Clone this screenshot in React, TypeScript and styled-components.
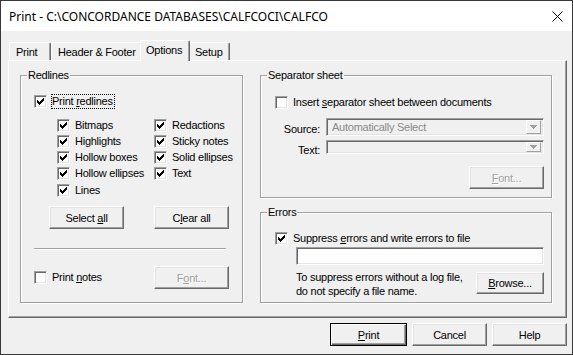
import React from 'react';
import styled, { createGlobalStyle, css } from 'styled-components';

const GlobalStyle = createGlobalStyle`
  html, body { margin: 0; padding: 0; background: #f0f0f0; }
  * { box-sizing: border-box; }
`;

const UI_FONT = `"Liberation Sans", Arial, sans-serif`;

const Window = styled.div`
  width: 573px;
  height: 355px;
  border: 1px solid #383838;
  background: #f0f0f0;
  display: flex;
  flex-direction: column;
  overflow: hidden;
  font-family: ${UI_FONT};
  font-size: 11px;
  letter-spacing: -0.25px;
  color: #000;
`;

const TitleBar = styled.div`
  flex: none;
  height: 30px;
  background: #fff;
  display: flex;
  align-items: center;
  justify-content: space-between;
  padding-left: 8px;
  font-family: "Noto Sans", sans-serif;
  font-size: 12px;
  letter-spacing: 0;
`;

const TitleText = styled.span`
  white-space: nowrap;
`;

const CloseButton = styled.div`
  width: 30px;
  height: 30px;
  display: flex;
  align-items: center;
  justify-content: center;
`;

const Body = styled.div`
  flex: 1;
  display: flex;
  flex-direction: column;
  padding: 9px 5px 8px 7px;
`;

const TabStrip = styled.div`
  display: flex;
  align-items: flex-end;
  padding-left: 1px;
  height: 20px;
`;

const Tab = styled.div<{ $width: number; $active?: boolean }>`
  width: ${(p) => p.$width}px;
  height: 18px;
  flex: none;
  display: flex;
  align-items: center;
  padding-left: 6px;
  background: #f0f0f0;
  border-top: 1px solid #fff;
  border-left: 1px solid #fff;
  border-right: 1px solid #696969;
  box-shadow: inset -1px 0 0 #a0a0a0;
  border-radius: 2px 2px 0 0;
  white-space: nowrap;
  ${(p) =>
    p.$active &&
    css`
      position: relative;
      z-index: 1;
      height: 21px;
      margin: 0 -2px -1px -2px;
      padding-left: 5px;
      padding-bottom: 3px;
    `}
`;

const Panel = styled.div`
  height: 258px;
  flex: none;
  display: grid;
  grid-template-columns: 223px 292px;
  column-gap: 17px;
  padding: 14px 14px 14px 11px;
  border-top: 1px solid #fff;
  border-left: 1px solid #fff;
  border-right: 1px solid #696969;
  border-bottom: 1px solid #696969;
  box-shadow: inset -1px -1px 0 #a0a0a0;
`;

const RightColumn = styled.div`
  display: flex;
  flex-direction: column;
  gap: 14px;
`;

const GroupBox = styled.div<{ $height?: number }>`
  position: relative;
  border: 1px solid #a0a0a0;
  box-shadow: inset 1px 1px 0 #fff, 1px 1px 0 #fff;
  ${(p) => (p.$height ? `height: ${p.$height}px; flex: none;` : `flex: 1;`)}
`;

const GroupTitle = styled.span`
  position: absolute;
  top: -7px;
  left: 6px;
  padding: 0 1px;
  line-height: 13px;
  background: #f0f0f0;
  white-space: nowrap;
`;

const RedlinesBody = styled.div`
  display: flex;
  flex-direction: column;
  align-items: flex-start;
  padding: 17px 0 0 13px;
`;

const SubGrid = styled.div`
  margin: 8px 0 0 23px;
  display: grid;
  grid-auto-flow: column;
  grid-template-rows: repeat(5, 16.25px);
  grid-template-columns: 97px auto;
`;

const ButtonRow = styled.div`
  margin: 8px 0 0 15px;
  display: flex;
  gap: 30px;
`;

const Divider = styled.div`
  margin-top: 19px;
  width: 192px;
  height: 2px;
  border-top: 1px solid #a0a0a0;
  border-bottom: 1px solid #fff;
`;

const NotesRow = styled.div`
  margin-top: 16px;
  display: grid;
  grid-template-columns: 120px 75px;
  align-items: center;
`;

const SepBody = styled.div`
  display: flex;
  flex-direction: column;
  padding: 18px 7px 0 14px;
`;

const FieldGrid = styled.div`
  margin-top: 8px;
  display: grid;
  grid-template-columns: 45px 1fr;
  grid-template-rows: 18px 17px;
  column-gap: 6px;
  row-gap: 4px;
`;

const FieldLabel = styled.span`
  justify-self: end;
  align-self: end;
  line-height: 13px;
  white-space: nowrap;
`;

const FontButtonRow = styled.div`
  margin-top: 9px;
  display: flex;
  justify-content: flex-end;
`;

const ErrorsBody = styled.div`
  display: flex;
  flex-direction: column;
  padding: 17px 7px 0 14px;
`;

const TextInput = styled.div`
  margin: 1px 0 0 21px;
  height: 18px;
  background: #fff;
  border: 1px solid;
  border-color: #a0a0a0 #fff #fff #a0a0a0;
  box-shadow: inset 1px 1px 0 #696969, inset -1px -1px 0 #e3e3e3;
`;

const InfoRow = styled.div`
  margin: 5px 0 0 21px;
  display: grid;
  grid-template-columns: 1fr 68px;
  align-items: start;
`;

const InfoText = styled.div`
  line-height: 14px;
`;

const BrowseWrap = styled.div`
  margin-top: 2px;
`;

const ButtonBar = styled.div`
  margin-top: 5px;
  display: flex;
  justify-content: flex-end;
  gap: 5px;
`;

const Button = styled.div<{ $width?: number; $height?: number; $disabled?: boolean; $default?: boolean }>`
  width: ${(p) => p.$width ?? 75}px;
  height: ${(p) => p.$height ?? 23}px;
  flex: none;
  display: flex;
  align-items: center;
  justify-content: center;
  background: #f0f0f0;
  border: 1px solid;
  border-color: #fff #696969 #696969 #fff;
  box-shadow: inset -1px -1px 0 #a0a0a0, inset 1px 1px 0 #e3e3e3;
  white-space: nowrap;
  ${(p) =>
    p.$disabled &&
    css`
      color: #a0a0a0;
      text-shadow: 1px 1px 0 #fff;
    `}
  ${(p) =>
    p.$default &&
    css`
      border-color: #000;
      box-shadow: inset 1px 1px 0 #fff, inset -1px -1px 0 #696969, inset -2px -2px 0 #a0a0a0;
    `}
`;

const ButtonLabel = styled.span`
  white-space: pre;
`;

const Key = styled.span`
  text-decoration: underline;
  text-underline-offset: 1px;
`;

const CheckRow = styled.div`
  height: 16px;
  display: flex;
  align-items: center;
  gap: 4px;
  white-space: nowrap;
`;

const CheckBoxFrame = styled.span`
  width: 13px;
  height: 13px;
  flex: none;
  display: flex;
  align-items: center;
  justify-content: center;
  background: #fff;
  border: 1px solid;
  border-color: #a0a0a0 #fff #fff #a0a0a0;
  box-shadow: inset 1px 1px 0 #696969, inset -1px -1px 0 #e3e3e3;
`;

const CheckLabel = styled.span<{ $focused?: boolean }>`
  line-height: 13px;
  border: 1px dotted ${(p) => (p.$focused ? '#000' : 'transparent')};
  padding-right: 1px;
`;

const Combo = styled.div<{ $height: number }>`
  height: ${(p) => p.$height}px;
  display: flex;
  align-items: center;
  background: #f0f0f0;
  border: 1px solid;
  border-color: #a0a0a0 #fff #fff #a0a0a0;
  box-shadow: inset 1px 1px 0 #696969, inset -1px -1px 0 #e3e3e3;
  padding: 1px 2px 1px 1px;
  align-self: start;
`;

const ComboText = styled.span`
  flex: 1;
  padding-left: 4px;
  color: #8a8a8a;
  white-space: nowrap;
`;

const ComboButton = styled.span`
  width: 15px;
  align-self: stretch;
  flex: none;
  display: flex;
  align-items: center;
  justify-content: center;
  background: #f0f0f0;
  border: 1px solid;
  border-color: #fff #a0a0a0 #a0a0a0 #fff;
`;

const CHECK = ['......#', '.....##', '#...###', '##.###.', '#####..', '.###...', '..#....'];
const CHECK_PATH = CHECK.flatMap((row, y) =>
  row.split('').map((c, x) => (c === '#' ? `M${x} ${y}h1v1h-1z` : ''))
).join('');

const CheckMark = () => (
  <svg width="7" height="7" viewBox="0 0 7 7" shapeRendering="crispEdges">
    <path d={CHECK_PATH} fill="#000" />
  </svg>
);

const CheckBox = ({ checked, focused, children }: { checked?: boolean; focused?: boolean; children: React.ReactNode }) => (
  <CheckRow>
    <CheckBoxFrame>{checked && <CheckMark />}</CheckBoxFrame>
    <CheckLabel $focused={focused}>{children}</CheckLabel>
  </CheckRow>
);

const DropArrow = () => (
  <svg width="7" height="4" viewBox="0 0 7 4" shapeRendering="crispEdges">
    <path d="M0 0h7v1h-1v1h-1v1h-1v1h-1v-1h-1v-1h-1v-1h-1z" fill="#a0a0a0" />
  </svg>
);

const CloseIcon = () => (
  <svg width="11" height="11" viewBox="0 0 11 11">
    <path d="M0.5 0.5L10.5 10.5M10.5 0.5L0.5 10.5" stroke="#000" strokeWidth="1" />
  </svg>
);

export default function App() {
  return (
    <>
      <GlobalStyle />
      <Window>
        <TitleBar>
          <TitleText>Print - C:\CONCORDANCE DATABASES\CALFCOCI\CALFCO</TitleText>
          <CloseButton>
            <CloseIcon />
          </CloseButton>
        </TitleBar>
        <Body>
          <TabStrip>
            <Tab $width={42}>Print</Tab>
            <Tab $width={91}>Header &amp; Footer</Tab>
            <Tab $width={50} $active>Options</Tab>
            <Tab $width={42}>Setup</Tab>
          </TabStrip>
          <Panel>
            <GroupBox $height={228}>
              <GroupTitle>Redlines</GroupTitle>
              <RedlinesBody>
                <CheckBox checked focused>
                  Print <Key>r</Key>edlines
                </CheckBox>
                <SubGrid>
                  <CheckBox checked>Bitmaps</CheckBox>
                  <CheckBox checked>Highlights</CheckBox>
                  <CheckBox checked>Hollow boxes</CheckBox>
                  <CheckBox checked>Hollow ellipses</CheckBox>
                  <CheckBox checked>Lines</CheckBox>
                  <CheckBox checked>Redactions</CheckBox>
                  <CheckBox checked>Sticky notes</CheckBox>
                  <CheckBox checked>Solid ellipses</CheckBox>
                  <CheckBox checked>Text</CheckBox>
                </SubGrid>
                <ButtonRow>
                  <Button>
                    <ButtonLabel>
                      Select <Key>a</Key>ll
                    </ButtonLabel>
                  </Button>
                  <Button>
                    <ButtonLabel>
                      C<Key>l</Key>ear all
                    </ButtonLabel>
                  </Button>
                </ButtonRow>
                <Divider />
                <NotesRow>
                  <CheckBox>
                    Print <Key>n</Key>otes
                  </CheckBox>
                  <Button $disabled>
                    <ButtonLabel>
                      F<Key>o</Key>nt...
                    </ButtonLabel>
                  </Button>
                </NotesRow>
              </RedlinesBody>
            </GroupBox>
            <RightColumn>
              <GroupBox $height={123}>
                <GroupTitle>Separator sheet</GroupTitle>
                <SepBody>
                  <CheckBox>
                    Insert <Key>s</Key>eparator sheet between documents
                  </CheckBox>
                  <FieldGrid>
                    <FieldLabel>Source:</FieldLabel>
                    <Combo $height={18}>
                      <ComboText>Automatically Select</ComboText>
                      <ComboButton>
                        <DropArrow />
                      </ComboButton>
                    </Combo>
                    <FieldLabel>Text:</FieldLabel>
                    <Combo $height={14}>
                      <ComboText />
                      <ComboButton>
                        <DropArrow />
                      </ComboButton>
                    </Combo>
                  </FieldGrid>
                  <FontButtonRow>
                    <Button $disabled>
                      <ButtonLabel>
                        <Key>F</Key>ont...
                      </ButtonLabel>
                    </Button>
                  </FontButtonRow>
                </SepBody>
              </GroupBox>
              <GroupBox>
                <GroupTitle>Errors</GroupTitle>
                <ErrorsBody>
                  <CheckBox checked>
                    Suppress <Key>e</Key>rrors and write errors to file
                  </CheckBox>
                  <TextInput />
                  <InfoRow>
                    <InfoText>
                      To suppress errors without a log file,
                      <br />
                      do not specify a file name.
                    </InfoText>
                    <BrowseWrap>
                      <Button $width={68} $height={22}>
                        <ButtonLabel>
                          <Key>B</Key>rowse...
                        </ButtonLabel>
                      </Button>
                    </BrowseWrap>
                  </InfoRow>
                </ErrorsBody>
              </GroupBox>
            </RightColumn>
          </Panel>
          <ButtonBar>
            <Button $width={77} $default>
              <ButtonLabel>
                <Key>P</Key>rint
              </ButtonLabel>
            </Button>
            <Button>
              <ButtonLabel>Cancel</ButtonLabel>
            </Button>
            <Button>
              <ButtonLabel>Help</ButtonLabel>
            </Button>
          </ButtonBar>
        </Body>
      </Window>
    </>
  );
}
